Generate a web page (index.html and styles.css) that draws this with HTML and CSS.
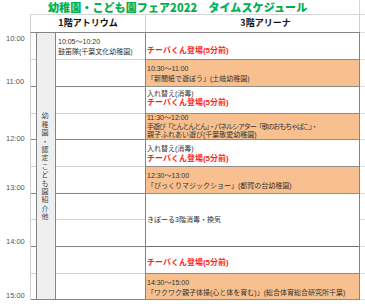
FILE: index.html
```html
<!DOCTYPE html>
<html lang="ja">
<head>
<meta charset="utf-8">
<title>タイムスケジュール</title>
<link rel="stylesheet" href="styles.css">
</head>
<body>
<div class="sheet">
  <div class="title-row">
    <div class="gutter"></div>
    <div class="title-cell"><h1 class="title">幼稚園・こども園フェア2022　タイムスケジュール</h1></div>
    <div class="edge"></div>
  </div>
  <div class="header-row">
    <div class="gutter"></div>
    <div class="head head-atrium">1階アトリウム</div>
    <div class="head head-arena">3階アリーナ</div>
    <div class="edge"></div>
  </div>
  <div class="grid">
    <div class="times">
      <span class="time t10">10:00</span>
      <span class="time t11">11:00</span>
      <span class="time t12">12:00</span>
      <span class="time t13">13:00</span>
      <span class="time t14">14:00</span>
      <span class="time t15">15:00</span>
    </div>
    <div class="col ticks">
      <div class="r h27 half"></div><div class="r h27 hour"></div>
      <div class="r h27 half"></div><div class="r h26 hour"></div>
      <div class="r h27 half"></div><div class="r h27 hour"></div>
      <div class="r h26 half"></div><div class="r h27 hour"></div>
      <div class="r h27 half"></div><div class="r h26 hour"></div>
    </div>
    <div class="vcell"><span class="vtext">幼稚園・認定こども園紹介他</span></div>
    <div class="col atrium">
      <div class="r h27 half cell pad5"><span>10:05〜10:20</span><span>鼓笛隊(千葉文化幼稚園)</span></div>
      <div class="r h27 hour"></div>
      <div class="r h27 half"></div><div class="r h26 hour"></div>
      <div class="r h27 half"></div><div class="r h27 hour"></div>
      <div class="r h26 half"></div><div class="r h27 hour"></div>
      <div class="r h27 half"></div><div class="r h26 hour"></div>
    </div>
    <div class="col arena">
      <div class="r h27 line cell pad13"><span class="red">チーバくん登場(5分前)</span></div>
      <div class="r h27 line cell orange pad4"><span>10:30〜11:00</span><span>「新聞紙で遊ぼう」(土岐幼稚園)</span></div>
      <div class="r h27 line cell pad3 tight"><span>入れ替え(消毒)</span><span class="red">チーバくん登場(5分前)</span></div>
      <div class="r h26 line cell orange pad0 tight"><span>11:30〜12:00</span><span class="condensed">手遊び「とんとんとん」・パネルシアター「歌のおもちゃばこ」・</span><span>親子ふれあい遊び(千葉敬愛幼稚園)</span></div>
      <div class="r h27 line cell pad4"><span>入れ替え(消毒)</span><span class="red">チーバくん登場(5分前)</span></div>
      <div class="r h27 line cell orange pad4"><span>12:30〜13:00</span><span>「びっくりマジックショー」(都賀の台幼稚園)</span></div>
      <div class="r h53 hourline cell middle"><span>きぼーる3階消毒・換気</span></div>
      <div class="r h27 line cell pad11"><span class="red">チーバくん登場(5分前)</span></div>
      <div class="r h26 line cell orange pad4"><span>14:30〜15:00</span><span>「ワクワク親子体操(心と体を育む)」(総合体育総合研究所千葉)</span></div>
    </div>
    <div class="col extra">
      <div class="r h27 soft"></div><div class="r h27 soft"></div>
      <div class="r h27 soft"></div><div class="r h26 soft"></div>
      <div class="r h27 soft"></div><div class="r h27 soft"></div>
      <div class="r h26 soft"></div><div class="r h27 soft"></div>
      <div class="r h27 soft"></div><div class="r h26 soft"></div>
    </div>
  </div>
</div>
</body>
</html>
```

FILE: styles.css
```css
* {
  box-sizing: border-box;
  margin: 0;
  padding: 0;
}

html, body {
  width: 365px;
  height: 304px;
  overflow: hidden;
  background: #ffffff;
}

body {
  font-family: "Liberation Sans", "Noto Sans CJK JP", sans-serif;
  color: #333333;
}

.sheet {
  width: 365px;
}

.title-row {
  display: grid;
  grid-template-columns: 30px 330px 5px;
  height: 15px;
}

.title-cell {
  border-bottom: 1px solid #d6d6d6;
  border-right: 1px solid #d6d6d6;
}

.title-row .edge {
  border-bottom: 1px solid #d6d6d6;
}

.title {
  font-family: "Noto Sans CJK JP", sans-serif;
  font-weight: 900;
  font-size: 11px;
  line-height: 14px;
  color: #00b050;
  padding-left: 18px;
  letter-spacing: 0.1px;
  white-space: nowrap;
}

.header-row {
  display: grid;
  grid-template-columns: 30px 116px 214px 5px;
  height: 17px;
}

.head {
  font-family: "Noto Sans CJK JP", sans-serif;
  font-weight: 700;
  font-size: 9px;
  line-height: 16px;
  color: #111111;
  text-align: center;
  white-space: nowrap;
}

.head-atrium {
  border-left: 1px solid #d0d0d0;
  border-right: 1px solid #d0d0d0;
}

.head-arena {
  border-right: 1px solid #d0d0d0;
  padding-left: 26px;
}

.grid {
  display: grid;
  grid-template-columns: 30px 6px 20px 90px 214px 5px;
}

.times {
  display: flex;
  flex-direction: column;
  font-size: 7.5px;
  line-height: 8px;
  color: #555555;
  padding-left: 6px;
}

.time { display: block; }
.t10 { margin-top: 3px; }
.t11 { margin-top: 35px; }
.t12 { margin-top: 49px; }
.t13 { margin-top: 41px; }
.t14 { margin-top: 46px; }
.t15 { margin-top: 46px; }

.col {
  display: flex;
  flex-direction: column;
  border-top: 1px solid #858585;
}

.ticks {
  border-left: 1px solid #d0d0d0;
}

.r { flex: none; }
.h26 { height: 26px; }
.h27 { height: 27px; }
.h53 { height: 53px; }

.half { border-bottom: 1px solid #d2d2d2; }
.hour { border-bottom: 1px solid #858585; }
.line { border-bottom: 1px solid #8e8e8e; }
.hourline { border-bottom: 1px solid #6f6f6f; }
.soft { border-bottom: 1px solid #dedede; }

.vcell {
  border: 1px solid #858585;
  background: #efefef;
  height: 268px;
  display: flex;
  align-items: center;
  justify-content: center;
  padding-right: 2px;
}

.vtext {
  display: block;
  width: 7px;
  font-family: "Noto Sans CJK JP", sans-serif;
  font-size: 7px;
  line-height: 8.4px;
  word-break: break-all;
  line-break: anywhere;
  text-align: center;
  color: #444444;
}

.atrium {
  border-right: 1px solid #858585;
}

.arena {
  border-right: 1px solid #858585;
}

.extra {
  border-top: 1px solid #dedede;
}

.cell {
  display: flex;
  flex-direction: column;
  font-size: 7px;
  line-height: 9.5px;
  padding-left: 1px;
  white-space: nowrap;
  overflow: hidden;
}

.atrium .cell { padding-left: 2px; }

.cell span {
  display: block;
}

.cell .condensed {
  letter-spacing: -1.1px;
}

.pad0 { padding-top: 0; }
.pad3 { padding-top: 3px; }
.pad4 { padding-top: 4px; }
.pad5 { padding-top: 4px; }
.pad11 { padding-top: 11px; }
.pad13 { padding-top: 13px; }

.tight { line-height: 8.5px; }

.middle { justify-content: center; }

.orange { background: #f7c08e; }

.red {
  color: #ff1f1f;
  font-weight: 700;
  font-size: 8px;
}
```
